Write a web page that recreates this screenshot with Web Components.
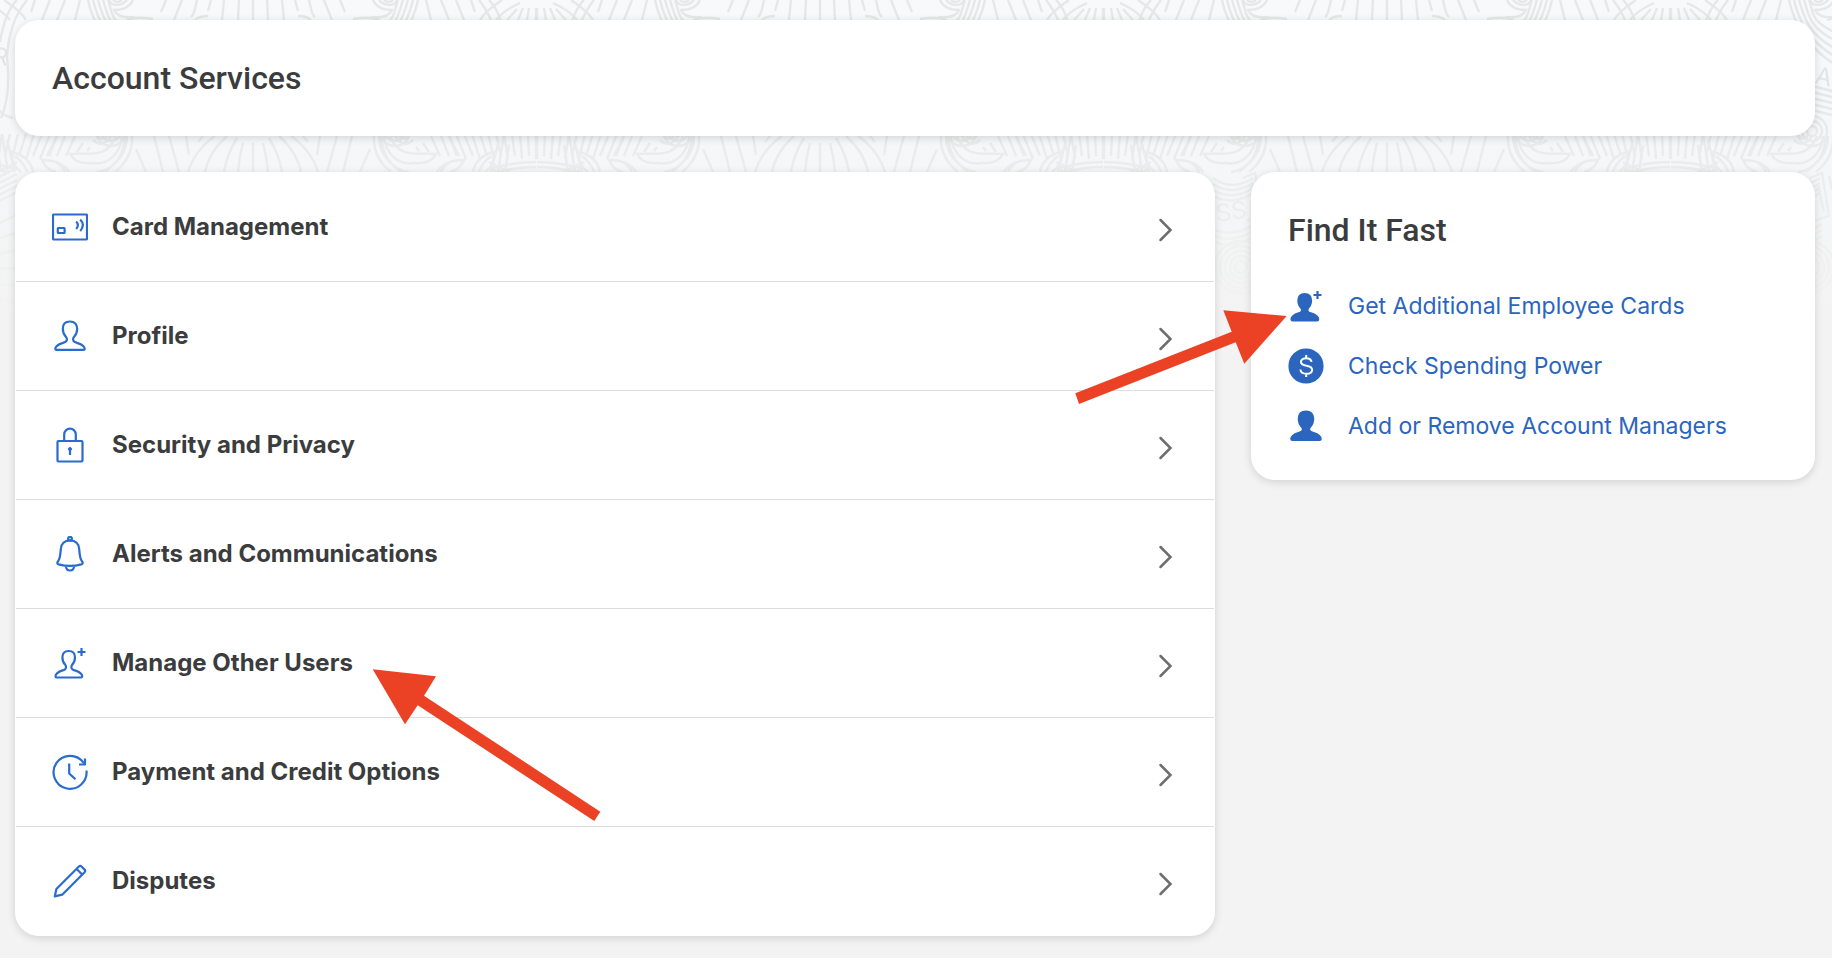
<!DOCTYPE html>
<html lang="en">
<head>
<meta charset="utf-8">
<meta name="viewport" content="width=device-width, initial-scale=1">
<title>Account Services</title>
<style>
  body { margin: 0; background: #f3f3f3; font-family: Inter, "Noto Sans", sans-serif; color: #3b3c3d; }
</style>
</head>
<body>
<account-page>
  <page-card slot="header" class="banner"><card-title level="1">Account Services</card-title></page-card>

  <service-list slot="main">
    <service-row icon="card">Card Management</service-row>
    <service-row icon="person">Profile</service-row>
    <service-row icon="lock">Security and Privacy</service-row>
    <service-row icon="bell">Alerts and Communications</service-row>
    <service-row icon="person-plus">Manage Other Users</service-row>
    <service-row icon="clock">Payment and Credit Options</service-row>
    <service-row icon="pencil">Disputes</service-row>
  </service-list>

  <quick-links slot="aside" heading="Find It Fast">
    <quick-link icon="person-plus">Get Additional Employee Cards</quick-link>
    <quick-link icon="dollar">Check Spending Power</quick-link>
    <quick-link icon="person">Add or Remove Account Managers</quick-link>
  </quick-links>
</account-page>

<script>
const PERSON = 'M18 3.5c-4.7 0-7.2 3-7.2 7.3 0 4.4 1.5 6.4 3.4 8.4 1 1.3 1 3.400-.4 4.5C11.5 25.5 3.6 25.8 3.3 30.8q0 1.1 1.1 1.1h27.2q1.1 0 1.1-1.1C32.4 25.8 24.5 25.5 22.2 23.7c-1.4-1.1-1.4-3.2-.4-4.5 1.9-2 3.4-4 3.4-8.4C25.2 6.5 22.7 3.5 18 3.5z';
const PERSON_PLUS = 'M16.7 6c-4.2 0-6.3 2.6-6.3 6.5 0 4 1.3 5.8 3 7.6.9 1.2.9 3.2-.4 4.2C10.8 26 3.7 26.3 3.5 31.3q0 1.2 1.2 1.2h24.3q1.2 0 1.2-1.2C30 26.3 22.6 26 20.4 24.3c-1.3-1-1.3-3-.4-4.2 1.7-1.8 3-3.6 3-7.6C23 8.6 20.9 6 16.7 6z';
const PLUS = '<path d="M29.500 3v8M25.500 7h8"/>';
const OUTLINE = {
  card: '<rect x="1" y="5.5" width="34" height="25" rx=".8"/><rect x="5.8" y="19" width="6.8" height="5" rx=".5"/><path d="M24.2 12.5q3.4 3.5 0 7.5M28.2 10.5q5.4 5.5 0 11.5"/>',
  person: `<path d="${PERSON}"/>`,
  'person-plus': `<path d="${PERSON_PLUS}"/>${PLUS}`,
  lock: '<rect x="5.5" y="14" width="25" height="20.5" rx="1"/><path d="M12.2 14V7.5a5.8 5.8 0 0 1 11.6 0V14"/><circle cx="18" cy="22" r="1.5" fill="currentColor" stroke-width="1"/><path d="M18 22v6"/>',
  bell: '<path d="M18 4.5c-6 0-8.8 3.6-9.2 8.6-.4 6.2-.8 10-2.900 12.400-1 1.200-.7 2.400.8 2.900 6.600 1.800 16 1.800 22.600 0 1.500-.5 1.800-1.700.8-2.900-2.100-2.400-2.500-6.200-2.900-12.400-.4-5-3.200-8.600-9.200-8.600zM13.800 30c.5 6 7.900 6 8.400 0"/><circle cx="18" cy="2.800" r="1.9"/>',
  clock: '<path d="M34.500 16.500A16.500 16.500 0 1 1 31.600 8.800"/><path d="M33 4.500V10.500H27M31.500 9l1.500 1.500"/><path d="M17.200 9.500V19.500l6.300 5.800"/>',
  pencil: '<path d="M2.800 33.300 4.400 26 26.900 3.500q1.300-1.200 2.600 0l3.100 3.100q1.200 1.300 0 2.600L10.200 31.700zM24.600 6l5.300 5.300"/>'
};
const SOLID = {
  person: `<path d="${PERSON}" fill="currentColor"/>`,
  'person-plus': `<path d="${PERSON_PLUS}" fill="currentColor"/>${PLUS}`,
  dollar: '<circle cx="18" cy="18" r="16.5" fill="currentColor"/><g stroke="#fff" stroke-width="2"><path d="M23.600 13.900c-.5-2.400-2.700-3.700-5.400-3.700-3.100 0-5.300 1.600-5.300 3.900 0 5.300 11.200 2.200 11.200 7.600 0 2.500-2.400 4.100-5.700 4.100-3.200 0-5.700-1.600-6-4.300M18.200 7v3.200M18.200 25.800v3.200"/></g>'
};

/* Shadow-root helper: each element passes its own styles and markup. */
class Base extends HTMLElement {
  connectedCallback() {
    if (this.shadowRoot) return;
    const t = document.createElement('template');
    t.innerHTML = this.render();
    this.attachShadow({ mode: 'open' }).append(t.content.cloneNode(true));
  }
}

/* Engraved line-work that fades out behind the top of the page. */
customElements.define('guilloche-backdrop', class extends Base {
  render() {
    let rays = '';
    for (let i = 0; i < 12; i++) {
      const x = 283 - i * 7;
      rays += `M${x - i} 134L${x} ${159 - i % 2 * 3}`;
    }
    let sweep = '';
    for (let i = 0; i < 5; i++) sweep += `M${165 - i * 5} 0C${160 - i * 5} ${24 - i * 3} 145 ${48 - i * 7} 120 ${64 - i * 8}`;
    for (let i = 0; i < 5; i++) sweep += `M142 ${86 + i * 6}L118 ${92 + i * 6}`;
    for (let i = 0; i < 4; i++) sweep += `M174 ${178 + i * 6}C160 ${188 + i * 5} 146 ${186 + i * 5} 134 ${178 + i * 5}`;
    for (let i = 0; i < 3; i++) sweep += `M174 ${229 + i * 6}C160 ${236 + i * 6} 146 ${233 + i * 6} 132 ${224 + i * 6}`;
    for (let i = 0; i < 6; i++) sweep += `M256 ${172 + i * 6}L236 ${162 + i * 6}`;
    for (let i = 0; i < 6; i++) sweep += `M256 ${224 + i * 15}L234 ${214 + i * 18}`;
    const half = `
      <path d="M0 0V20M14 0L15 20M29 0L31 20M42 0L45 11M45 16Q54 16 58 20M56 0C58 8 58 14 62 17M71 0L79 20M87 0L92 12M100 19C112 17 122 18 127 20
        M120 0C124 9 132 10 139 10C136 17 128 18 118 17M126 0C132 7 142 6 144 0M131 0Q136 4 140 0
        M173 0L178 20M188 0L196 20M203 0L211 20M218 0L222 12
        M249 0C240 6 231 13 227 20M267 3C256 8 248 13 243 20M264 9L254 20M270 8L265 20M276 8L274 20M283 8V20"/>
      <path d="M0 143V172M10 143Q14 158 15 172M16 138Q26 154 29 172M26 136Q44 152 48 172M38 136Q58 150 65 172M50 136L55 142M67 136L64 155M84 136L74 172M99 136L90 172M117 149L107 172
        M121 136C120 152 128 164 138 172M126 136C126 152 134 161 148 172M131 136C132 152 144 166 162 163Q178 164 183 154C166 152 146 160 137 136M142 136Q150 149 160 140M146 136Q150 141 156 136
        M128 136C130 160 142 170 156 172M163 147l3 4M170 143l6 9M178 136l9 20M188 136l8 20M196 136l8 20
        M184 172C190 162 202 160 211 160C208 167 202 171 197 172M196 163Q190 167 188 172M220 172C222 160 232 154 241 152C242 160 238 168 232 172M238 156Q228 164 226 172
        M240 168Q262 162 283 162M246 172Q264 167 283 167"/>
      <path d="${rays}"/><path d="${sweep}"/>
      <path d="M236 0Q248 12 253 42M226 0Q244 22 246 57Q242 96 252 118M240 118Q250 116 256 108M238 172L246 140M245 172L251 134M252 172L256 145"/>
      <path d="M144 178L132 173L125 216L140 221M136 184L130 212M125 176L122 190"/>
      <g fill="none"><circle cx="142" cy="131" r="5"/><circle cx="142" cy="131" r="10"/><circle cx="142" cy="131" r="15"/>
      <circle cx="146" cy="267" r="6"/><circle cx="146" cy="267" r="11"/><circle cx="146" cy="267" r="16"/><circle cx="146" cy="267" r="21"/><circle cx="146" cy="267" r="26"/></g>`;
    return `<style>
      :host { display: block; position: absolute; inset: 0 0 auto 0; height: 320px; background: linear-gradient(#f7f9fb, #f5f6f7 60%, #f3f3f3); overflow: hidden; }
      svg { display: block; width: 100%; height: 100%; mask-image: linear-gradient(#000 30%, #0009 60%, transparent 98%); }
    </style>
    <svg aria-hidden="true"><defs><pattern id="p" width="567" height="320" patternUnits="userSpaceOnUse" x="253">
      <g fill="none" stroke="#e6e8e8" stroke-width="2.400"><g>${half}</g><g transform="translate(567) scale(-1 1)">${half}</g></g>
      <g fill="#e3e5e5" font-family="Inter, sans-serif" font-size="24"><text x="306" y="64" transform="rotate(6 306 64)">R</text><text x="427" y="83" transform="rotate(12 427 83)">A</text><text x="397" y="222" transform="rotate(-8 397 222)">SS</text></g>
    </pattern></defs><rect width="100%" height="100%" fill="url(#p)"/></svg>`;
  }
});

customElements.define('account-page', class extends Base {
  render() {
    return `<style>
      :host { display: block; position: relative; min-height: 100vh; box-sizing: border-box; overflow: hidden; }
      main { position: relative; display: grid; grid-template-columns: minmax(0, 100fr) minmax(0, 47fr); gap: 36px; align-items: start; padding: 20px 17px 22px 15px; }
      .top { grid-column: 1 / -1; }
      .side { position: relative; z-index: 1; }
      @media (max-width: 900px) { main { grid-template-columns: minmax(0, 1fr); } }
    </style>
    <guilloche-backdrop></guilloche-backdrop>
    <main><div class="top"><slot name="header"></slot></div><div><slot name="main"></slot></div><div class="side"><slot name="aside"></slot></div></main>`;
  }
});

customElements.define('page-card', class extends Base {
  render() {
    return `<style>
      :host { display: block; background: #fff; border-radius: 24px; box-shadow: 0 2px 8px rgba(0, 0, 0, .14); }
      :host(.banner) { padding: 38px 37px; }
    </style><slot></slot>`;
  }
});

customElements.define('card-title', class extends Base {
  render() {
    const tag = 'h' + (this.getAttribute('level') || 2);
    return `<style>
      :host { display: block; }
      h1, h2 { margin: 0; font: 500 32px/40px Roboto, "Noto Sans", sans-serif; color: #3b3c3d; }
    </style><${tag}><slot></slot></${tag}>`;
  }
});

customElements.define('line-icon', class extends Base {
  render() {
    const set = this.hasAttribute('solid') ? SOLID : OUTLINE;
    return `<style>
      :host { display: block; flex: none; width: 36px; height: 36px; }
      svg { display: block; }
    </style>
    <svg width="36" height="36" viewBox="0 0 36 36" fill="none" stroke="currentColor" stroke-width="2.200" stroke-linejoin="round" aria-hidden="true">${set[this.getAttribute('name')]}</svg>`;
  }
});

customElements.define('service-list', class extends Base {
  render() {
    return `<style>
      :host { display: block; position: relative; }
      nav { padding: 1px; }
      pointer-arrow { position: absolute; left: 357px; top: 497px; }
    </style>
    <page-card><nav aria-label="Account services"><slot></slot></nav></page-card>
    <pointer-arrow width="229" height="152" points="0.700,0.300 64,7.300 52,26.700 228.300,142.700 222.300,152 45.700,36.300 33,55.300"></pointer-arrow>`;
  }
});

customElements.define('service-row', class extends Base {
  render() {
    return `<style>
      :host { display: block; border-bottom: 1px solid #dcdddd; }
      :host(:last-of-type) { border-bottom: 0; }
      a { display: flex; align-items: center; gap: 24px; padding: 36px; color: #3b3c3d; text-decoration: none; }
      line-icon { color: #2a6bcf; }
      .label { flex: 1; min-width: 0; font-size: 24px; line-height: 32px; font-weight: 700; }
      .chevron { flex: none; width: 24px; height: 30px; padding-top: 6px; }
    </style>
    <a href="#"><line-icon name="${this.getAttribute('icon')}"></line-icon><span class="label"><slot></slot></span>
    <svg class="chevron" viewBox="0 0 24 30" fill="none" stroke="#6d6e6f" stroke-width="2.500" stroke-linecap="round" aria-hidden="true"><path d="M6.500 5L16.500 15L6.500 25"/></svg></a>`;
  }
});

customElements.define('quick-links', class extends Base {
  render() {
    return `<style>
      :host { display: block; position: relative; }
      section { padding: 38px 37px 36px; }
      nav { display: grid; gap: 24px; margin-top: 38px; }
      pointer-arrow { position: absolute; left: -176px; top: 138px; }
    </style>
    <page-card><section><card-title level="2">${this.getAttribute('heading')}</card-title><nav aria-label="${this.getAttribute('heading')}"><slot></slot></nav></section></page-card>
    <pointer-arrow width="212" height="94" points="211.700,6 148.300,0.300 156.700,21.700 0.300,83.300 4,94 160.700,32.300 169.300,53.700"></pointer-arrow>`;
  }
});

customElements.define('quick-link', class extends Base {
  render() {
    return `<style>
      :host { display: block; }
      a { display: flex; align-items: center; gap: 24px; color: #2b65bd; text-decoration: none; font-size: 23px; line-height: 36px; }
    </style>
    <a href="#"><line-icon solid name="${this.getAttribute('icon')}"></line-icon><span><slot></slot></span></a>`;
  }
});

/* Red call-out arrow drawn over the cards. */
customElements.define('pointer-arrow', class extends Base {
  render() {
    const w = this.getAttribute('width'), h = this.getAttribute('height');
    return `<style>:host { display: block; pointer-events: none; } svg { display: block; overflow: visible; }</style>
    <svg width="${w}" height="${h}" viewBox="0 0 ${w} ${h}" aria-hidden="true"><polygon points="${this.getAttribute('points')}" fill="#eb4226"/></svg>`;
  }
});
</script>
</body>
</html>
